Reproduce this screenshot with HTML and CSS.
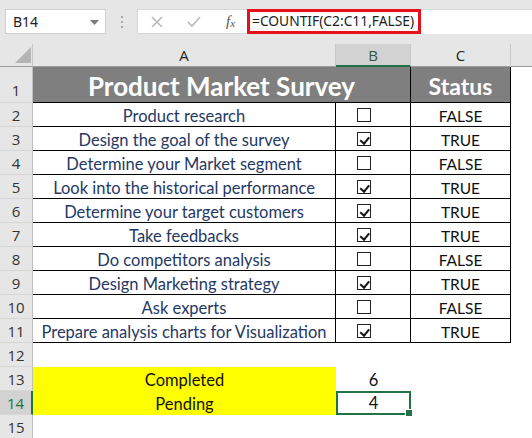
FILE: index.html
```html
<!DOCTYPE html>
<html>
<head>
<meta charset="utf-8">
<link rel="stylesheet" href="styles.css">
</head>
<body>
<div class="toolbar">
  <div class="namebox"><span>B14</span>
    <svg class="dd" width="9" height="5" viewBox="0 0 9 5"><polygon points="0,0 9,0 4.5,5" fill="#7a7a7a"/></svg>
  </div>
  <div class="dots"><i></i><i></i><i></i></div>
  <div class="fxbtns">
    <svg class="btn" width="14" height="14" viewBox="0 0 14 14"><path d="M2 2 L12 12 M12 2 L2 12" stroke="#b9b9b9" stroke-width="1.6" fill="none"/></svg>
    <svg class="btn" width="16" height="14" viewBox="0 0 16 14"><path d="M2 7 L6 11 L14 2" stroke="#b9b9b9" stroke-width="1.6" fill="none"/></svg>
    <span class="fx">f<sub>x</sub></span>
  </div>
  <div class="formula"><div class="redbox">=COUNTIF(C2:C11,FALSE)</div></div>
</div>

<div class="sheet">
  <div class="corner"><svg width="16" height="16" viewBox="0 0 16 16"><polygon points="16,0 16,16 0,16" fill="#b4b4b4"/></svg></div>
  <div class="ch">A</div>
  <div class="ch sel">B</div>
  <div class="ch">C</div>
  <div class="ch last"></div>

  <div class="rh tall">1</div>
  <div class="title">Product Market Survey</div>
  <div class="title status">Status</div>
  <div class="blank"></div>

  <div class="rh">2</div><div class="ca">Product research</div><div class="cb"><span class="box"></span></div><div class="cc">FALSE</div><div class="blank"></div>
  <div class="rh">3</div><div class="ca">Design the goal of the survey</div><div class="cb"><span class="box on"></span></div><div class="cc">TRUE</div><div class="blank"></div>
  <div class="rh">4</div><div class="ca">Determine your Market segment</div><div class="cb"><span class="box"></span></div><div class="cc">FALSE</div><div class="blank"></div>
  <div class="rh">5</div><div class="ca">Look into the historical performance</div><div class="cb"><span class="box on"></span></div><div class="cc">TRUE</div><div class="blank"></div>
  <div class="rh">6</div><div class="ca">Determine your target customers</div><div class="cb"><span class="box on"></span></div><div class="cc">TRUE</div><div class="blank"></div>
  <div class="rh">7</div><div class="ca">Take feedbacks</div><div class="cb"><span class="box on"></span></div><div class="cc">TRUE</div><div class="blank"></div>
  <div class="rh">8</div><div class="ca">Do competitors analysis</div><div class="cb"><span class="box"></span></div><div class="cc">FALSE</div><div class="blank"></div>
  <div class="rh">9</div><div class="ca">Design Marketing strategy</div><div class="cb"><span class="box on"></span></div><div class="cc">TRUE</div><div class="blank"></div>
  <div class="rh">10</div><div class="ca">Ask experts</div><div class="cb"><span class="box"></span></div><div class="cc">FALSE</div><div class="blank"></div>
  <div class="rh">11</div><div class="ca">Prepare analysis charts for Visualization</div><div class="cb"><span class="box on"></span></div><div class="cc">TRUE</div><div class="blank"></div>

  <div class="rh">12</div><div class="e"></div><div class="e"></div><div class="e"></div><div class="blank"></div>
  <div class="rh">13</div><div class="e yel">Completed</div><div class="e num">6</div><div class="e"></div><div class="blank"></div>
  <div class="rh selr">14</div><div class="e yel">Pending</div><div class="e num active">4</div><div class="e"></div><div class="blank"></div>
  <div class="rh">15</div><div class="e"></div><div class="e"></div><div class="e"></div><div class="blank"></div>
</div>
</body>
</html>
```

FILE: styles.css
```css
* { box-sizing: border-box; }
html, body { margin: 0; padding: 0; }
body {
  width: 532px;
  height: 438px;
  overflow: hidden;
  background: #ffffff;
  font-family: "Lato", "Liberation Sans", sans-serif;
}

/* ---------- formula bar ---------- */
.toolbar {
  height: 44px;
  background: #e6e6e6;
  display: flex;
  align-items: flex-start;
  padding: 9px 0 0 5px;
}
.namebox {
  width: 101px;
  height: 25px;
  background: #fff;
  border: 1px solid #d0d0d0;
  display: flex;
  align-items: center;
  justify-content: space-between;
  padding: 0 6px 0 7px;
  font-family: "Noto Sans", sans-serif;
  font-size: 14px;
  color: #222;
}
.dd { margin-top: 1px; }
.dots {
  width: 31px;
  height: 25px;
  display: flex;
  flex-direction: column;
  align-items: center;
  justify-content: center;
  gap: 3px;
}
.dots i {
  display: block;
  width: 2px;
  height: 2px;
  background: #a8a8a8;
}
.fxbtns {
  width: 110px;
  height: 25px;
  background: #fff;
  border: 1px solid #d8d8d8;
  border-right: none;
  display: flex;
  align-items: center;
  padding-left: 12px;
}
.btn { margin-right: 22px; }
.fx {
  font-family: "Liberation Serif", serif;
  font-style: italic;
  font-size: 15px;
  color: #555;
  margin-left: 2px;
}
.fx sub { font-size: 11px; vertical-align: -1px; }
.formula {
  flex: 1;
  height: 25px;
  background: #fff;
  border-top: 1px solid #d8d8d8;
}
.redbox {
  width: 174px;
  height: 25px;
  margin-top: -1px;
  border: 3px solid #e8101a;
  font-family: "Noto Sans", sans-serif;
  font-size: 13.8px;
  color: #222;
  line-height: 18px;
  padding-left: 2px;
  white-space: nowrap;
}

/* ---------- sheet ---------- */
.sheet {
  display: grid;
  grid-template-columns: 33px 303px 75px 100px 21px;
  grid-template-rows: 23px 36px repeat(14, 24px);
}
.corner {
  background: #e6e6e6;
  border-right: 1px solid #c8c8c8;
  border-bottom: 1px solid #9b9b9b;
  display: flex;
  align-items: flex-end;
  justify-content: flex-end;
  padding: 0 1px 3px 0;
}
.ch {
  background: #e6e6e6;
  border-right: 1px solid #c8c8c8;
  border-bottom: 1px solid #9b9b9b;
  font-family: "Open Sans", sans-serif;
  font-size: 15px;
  color: #222;
  display: flex;
  align-items: center;
  justify-content: center;
}
.ch.sel {
  background: #d2d2d2;
  border-bottom: 2px solid #217346;
  color: #2f5a40;
}
.ch.last { border-right: none; }

.rh {
  background: #e6e6e6;
  border-right: 1px solid #c0c0c0;
  border-bottom: 1px solid #d6d6d6;
  font-family: "Open Sans", sans-serif;
  font-size: 15px;
  color: #333;
  display: flex;
  align-items: center;
  justify-content: center;
  padding-top: 1px;
}
.rh.tall { align-items: flex-end; padding-bottom: 2px; }
.rh.selr {
  background: #d2d2d2;
  border-right: 2px solid #217346;
  color: #217346;
}

.title {
  grid-column: span 2;
  background: #7f7f7f;
  border-right: 1px solid #000;
  border-bottom: 1px solid #000;
  color: #fff;
  font-weight: bold;
  font-size: 26px;
  display: flex;
  align-items: center;
  justify-content: center;
  padding-top: 2px;
}
.title.status { grid-column: span 1; font-size: 23px; }
.blank { background: #fff; }

.ca, .cb, .cc {
  border-right: 1px solid #000;
  border-bottom: 1px solid #000;
  display: flex;
  align-items: center;
  justify-content: center;
  font-size: 16.5px;
  white-space: nowrap;
  padding-top: 2px;
}
.ca { color: #1f3864; }
.cc { color: #111; font-size: 15.5px; }
.cb { justify-content: flex-start; padding-left: 21px; padding-top: 1px; }
.box {
  width: 14px;
  height: 14px;
  border: 1px solid #222;
  background: #fff;
  position: relative;
}
.box.on::after {
  content: "";
  position: absolute;
  left: 3.5px;
  top: 1.5px;
  width: 3.5px;
  height: 6.5px;
  border-right: 2px solid #111;
  border-bottom: 2px solid #111;
  transform: rotate(40deg);
}

.e {
  background: #fff;
  display: flex;
  align-items: center;
  justify-content: center;
  font-size: 16.5px;
  color: #111;
  padding-top: 2px;
}
.e.yel { background: #ffff00; }
.e.active {
  border: 2px solid #217346;
  padding-top: 0;
  position: relative;
}
.e.active::after {
  content: "";
  position: absolute;
  right: -4px;
  bottom: -4px;
  width: 6px;
  height: 6px;
  background: #217346;
  border: 1px solid #fff;
}
```
